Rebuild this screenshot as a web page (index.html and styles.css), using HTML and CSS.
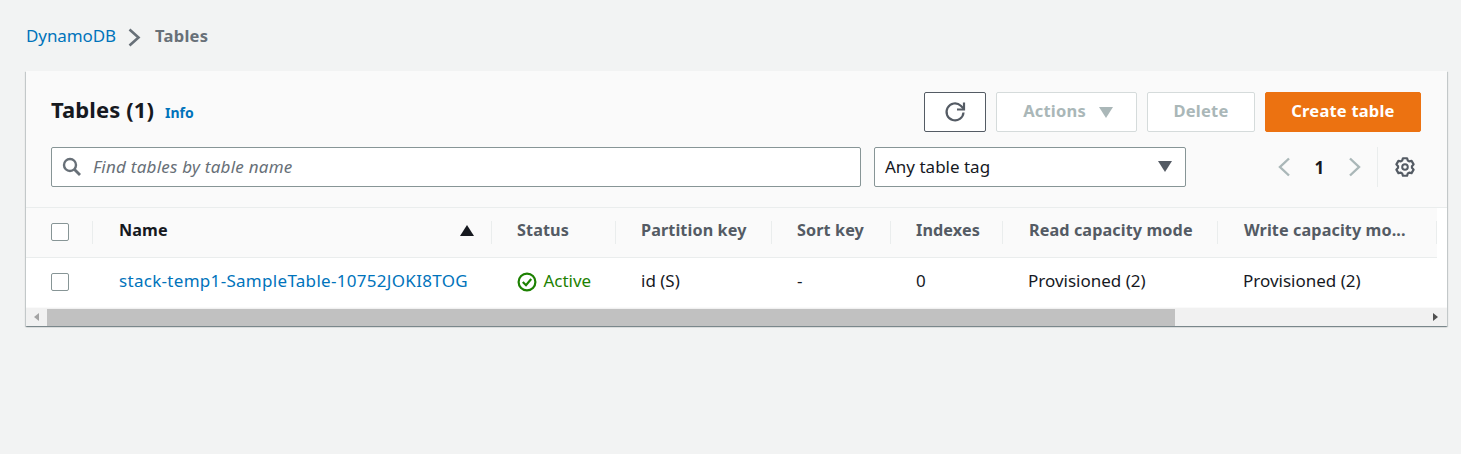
FILE: index.html
```html
<!DOCTYPE html>
<html lang="en">
<head>
    <meta charset="UTF-8">
    <meta name="viewport" content="width=device-width, initial-scale=1.0">
    <title>Tables | DynamoDB</title>

    <link rel="stylesheet" href="styles.css">
</head>
<body>

<nav class="breadcrumb">
    <a href="#">DynamoDB</a>
    <svg class="crumb-arrow" width="16" height="20" viewBox="0 0 16 20"><path d="M2.500 2.500l9 8-9 8" fill="none" stroke="#687078" stroke-width="2.600"/></svg>
    <span>Tables</span>
</nav>

<section class="card">
    <header class="card-head">
        <div class="title-row">
            <h1>Tables (1)</h1>
            <a class="info" href="#">Info</a>
            <div class="actions">
                <button class="btn btn-refresh" aria-label="Refresh">
                    <svg width="24" height="24" viewBox="0 0 24 24"><path d="M20.500 12.500a8.500 8.500 0 1 1-2.700-6.800L20.500 8.500" fill="none" stroke="#545b64" stroke-width="2.200"/><path d="M21 2.500v7h-7" fill="none" stroke="#545b64" stroke-width="2.200"/></svg>
                </button>
                <button class="btn btn-actions" disabled>Actions <span class="tri tri-light"></span></button>
                <button class="btn btn-delete" disabled>Delete</button>
                <button class="btn btn-primary">Create table</button>
            </div>
        </div>
        <div class="filter-row">
            <div class="search">
                <svg width="20" height="20" viewBox="0 0 20 20"><circle cx="8" cy="8" r="6" fill="none" stroke="#687078" stroke-width="2.400"/><path d="M12.500 12.500l5.500 5.500" stroke="#687078" stroke-width="2.800"/></svg>
                <span>Find tables by table name</span>
            </div>
            <div class="select">
                <span>Any table tag</span>
                <span class="tri tri-dark"></span>
            </div>
            <div class="pager">
                <svg width="16" height="22" viewBox="0 0 16 22"><path d="M13 2.500L4 11l9 8.500" fill="none" stroke="#aab7b8" stroke-width="2.400"/></svg>
                <span class="page-num">1</span>
                <svg width="16" height="22" viewBox="0 0 16 22"><path d="M3 2.500L12 11l-9 8.500" fill="none" stroke="#aab7b8" stroke-width="2.400"/></svg>
            </div>
            <div class="settings">
                <svg width="22" height="22" viewBox="0 0 22 22"><path d="M8.150 4.610L8.980 2.230H13.020L13.850 4.610L15.110 5.340L17.580 4.860L19.610 8.370L17.960 10.270V11.730L19.610 13.630L17.580 17.140L15.110 16.660L13.850 17.390L13.020 19.770H8.980L8.150 17.390L6.890 16.660L4.420 17.140L2.390 13.630L4.040 11.730V10.270L2.390 8.370L4.420 4.860L6.890 5.340z" fill="none" stroke="#545b64" stroke-width="2.200" stroke-linejoin="round"/><circle cx="11" cy="11" r="2.800" fill="none" stroke="#545b64" stroke-width="2"/></svg>
            </div>
        </div>
    </header>

    <table class="tables">
        <thead>
            <tr>
                <th class="col-check"><span class="cell"><span class="checkbox"></span></span></th>
                <th class="col-name"><span class="cell name-cell">Name <span class="tri tri-sort"></span></span></th>
                <th class="col-status"><span class="cell">Status</span></th>
                <th class="col-part"><span class="cell">Partition key</span></th>
                <th class="col-sort"><span class="cell">Sort key</span></th>
                <th class="col-index"><span class="cell">Indexes</span></th>
                <th class="col-read"><span class="cell">Read capacity mode</span></th>
                <th class="col-write"><span class="cell">Write capacity mo...</span></th>
            </tr>
        </thead>
        <tbody>
            <tr>
                <td><span class="checkbox"></span></td>
                <td><a class="table-link" href="#">stack-temp1-SampleTable-10752JOKI8TOG</a></td>
                <td class="active">
                    <svg width="20" height="20" viewBox="0 0 20 20"><circle cx="10" cy="10" r="8.400" fill="none" stroke="#1d8102" stroke-width="2.200"/><path d="M5.800 10l3.200 3.200 5.200-6.200" fill="none" stroke="#1d8102" stroke-width="2.200"/></svg>
                    Active
                </td>
                <td>id (S)</td>
                <td>-</td>
                <td>0</td>
                <td>Provisioned (2)</td>
                <td>Provisioned (2)</td>
            </tr>
        </tbody>
    </table>

    <div class="scrollbar">
        <span class="scroll-arrow scroll-left"></span>
        <div class="scroll-track"><div class="scroll-thumb"></div></div>
        <span class="scroll-arrow scroll-right"></span>
    </div>
</section>

</body>
</html>
```

FILE: styles.css
```css
* {
    box-sizing: border-box;
}

body {
    margin: 0;
    height: 454px;
    padding: 26px 14px 0 26px;
    background-color: #f2f3f3;
    font-family: "Noto Sans", Arial, sans-serif;
    font-size: 17px;
    color: #16191f;
    overflow: hidden;
}

a {
    color: #0073bb;
    text-decoration: none;
}

.breadcrumb {
    display: flex;
    align-items: center;
    height: 20px;
    margin-bottom: 25px;
    line-height: 20px;
}

.breadcrumb a {
    letter-spacing: -0.1px;
}

.crumb-arrow {
    margin: 1px 12px 0 11px;
}

.breadcrumb span {
    color: #687078;
    font-weight: 700;
    font-size: 16.500px;
    letter-spacing: 0.3px;
}

.card {
    width: 1421px;
    background-color: #fff;
    box-shadow: 0 1px 1px 0 rgba(0, 28, 36, 0.3), 1px 1px 1px 0 rgba(0, 28, 36, 0.15), -1px 1px 1px 0 rgba(0, 28, 36, 0.15);
}

.card-head {
    height: 137px;
    padding: 21px 26px 0 25px;
    background-color: #fafafa;
    border-bottom: 1px solid #eaeded;
}

.title-row {
    display: flex;
    align-items: center;
    height: 40px;
}

h1 {
    margin: 0 0 7px;
    font-size: 22px;
    font-weight: 700;
    line-height: 30px;
    letter-spacing: 0.1px;
}

.info {
    margin-left: 11px;
    font-size: 14px;
    font-weight: 700;
}

.actions {
    display: flex;
    gap: 10px;
    margin-left: auto;
}

.btn {
    display: flex;
    align-items: center;
    justify-content: center;
    height: 40px;
    padding: 0 0 3px;
    border: 1px solid #d5dbdb;
    border-radius: 2px;
    background-color: #fff;
    font-family: inherit;
    font-size: 16.500px;
    font-weight: 700;
    letter-spacing: 0.2px;
    color: #aab7b8;
}

.btn-refresh {
    width: 62px;
    padding: 0;
    border-color: #545b64;
}

.btn-actions {
    width: 141px;
    gap: 13px;
    padding-left: 3px;
}

.btn-delete {
    width: 108px;
}

.btn-primary {
    width: 156px;
    border-color: #ec7211;
    background-color: #ec7211;
    color: #fff;
}

.tri {
    display: inline-block;
    width: 0;
    height: 0;
    border-left: 7px solid transparent;
    border-right: 7px solid transparent;
}

.tri-light {
    margin-top: 3px;
    border-top: 11px solid #aab7b8;
}

.tri-dark {
    border-top: 11px solid #545b64;
}

.tri-sort {
    border-bottom: 11px solid #16191f;
}

.filter-row {
    display: flex;
    align-items: center;
    height: 40px;
    margin-top: 15px;
}

.search {
    display: flex;
    align-items: center;
    gap: 11px;
    width: 810px;
    height: 40px;
    padding: 0 0 2px 10px;
    border: 1px solid #879596;
    border-radius: 2px;
    background-color: #fff;
    font-style: italic;
    letter-spacing: 0.24px;
    color: #687078;
}

.search svg {
    margin-top: 2px;
}

.select {
    display: flex;
    align-items: center;
    justify-content: space-between;
    width: 312px;
    height: 40px;
    margin-left: 13px;
    padding: 0 13px 2px 10px;
    border: 1px solid #879596;
    border-radius: 2px;
    background-color: #fff;
}

.pager {
    display: flex;
    align-items: center;
    gap: 22.500px;
    margin-left: 90px;
}

.page-num {
    width: 10px;
    font-weight: 700;
}

.settings {
    display: flex;
    align-items: center;
    height: 40px;
    margin-left: 14px;
    padding-left: 16px;
    border-left: 1px solid #eaeded;
}

.tables {
    width: 1411px;
    table-layout: fixed;
    border-collapse: collapse;
}

.col-check { width: 67px; }
.col-name { width: 399px; }
.col-status { width: 124px; }
.col-part { width: 156px; }
.col-sort { width: 119px; }
.col-index { width: 112px; }
.col-read { width: 215px; }
.col-write { width: 219px; }

th {
    height: 49px;
    padding: 0;
    background-color: #fafafa;
    border-bottom: 1px solid #eaeded;
    font-size: 16.200px;
    font-weight: 700;
    letter-spacing: 0.1px;
    text-align: left;
    color: #545b64;
}

th .cell {
    display: flex;
    align-items: center;
    height: 23px;
    padding-left: 25px;
    padding-bottom: 4px;
    border-right: 1px solid #eaeded;
}

th.col-check .cell {
    padding-bottom: 0;
}

th.col-name {
    color: #16191f;
}

th.col-read .cell,
th.col-write .cell,
th.col-name .cell {
    padding-left: 26px;
}

.name-cell {
    justify-content: space-between;
    padding-right: 17px;
}

td {
    height: 50px;
    padding: 0 0 4px 25px;
    white-space: nowrap;
}

td:first-child {
    padding-bottom: 0;
}

.table-link {
    margin-left: 1px;
    letter-spacing: 0.3px;
}

.checkbox {
    display: block;
    width: 18px;
    height: 18px;
    border: 1px solid #879596;
    border-radius: 2px;
    background-color: #fff;
}

.active {
    color: #1d8102;
}

.active svg {
    margin-right: 2px;
    vertical-align: -5px;
}

.scrollbar {
    display: flex;
    align-items: center;
    height: 19px;
    background-color: #f1f1f1;
    border-top: 1px solid #fafafa;
}

.scroll-arrow {
    width: 0;
    height: 0;
    border-top: 4px solid transparent;
    border-bottom: 4px solid transparent;
}

.scroll-left {
    margin-left: 8px;
    border-right: 5px solid #a3a3a3;
}

.scroll-right {
    margin-right: 9px;
    border-left: 5px solid #505050;
}

.scroll-track {
    flex: 1;
    height: 17px;
    margin: 0 9px 0 8px;
}

.scroll-thumb {
    width: 1128px;
    height: 17px;
    background-color: #c1c1c1;
}
```
